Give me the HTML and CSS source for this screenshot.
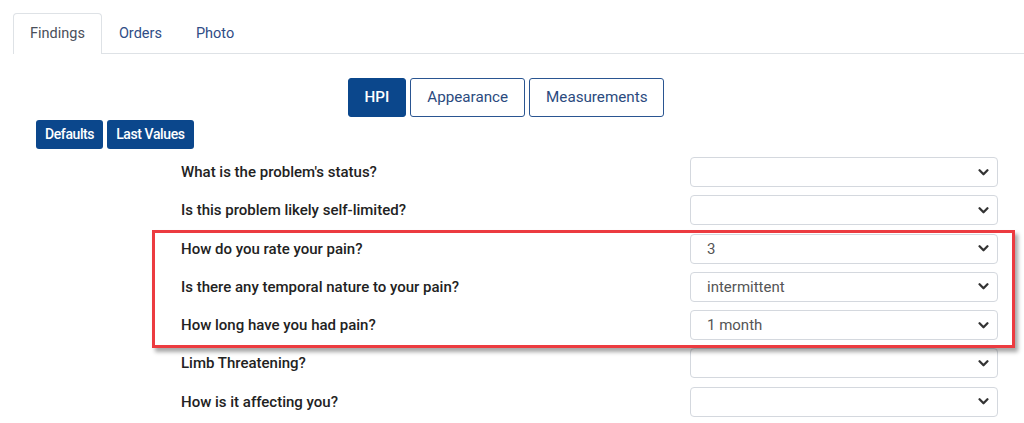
FILE: index.html
```html
<!DOCTYPE html>
<html>
<head>
<meta charset="utf-8">
<link rel="stylesheet" href="styles.css">
</head>
<body>
<div class="page">
  <div class="tabs">
    <div class="tab active">Findings</div>
    <div class="tab">Orders</div>
    <div class="tab">Photo</div>
  </div>
  <div class="seg">
    <div class="segbtn primary">HPI</div>
    <div class="segbtn">Appearance</div>
    <div class="segbtn">Measurements</div>
  </div>
  <div class="tools">
    <div class="tbtn">Defaults</div>
    <div class="tbtn">Last Values</div>
  </div>
  <div class="form">
    <div class="row"><div class="label">What is the problem's status?</div><div class="select"><span></span><svg class="chev" viewBox="0 0 12 8"><path d="M1.5 1.5 L6 6 L10.5 1.5" /></svg></div></div>
    <div class="row"><div class="label">Is this problem likely self-limited?</div><div class="select"><span></span><svg class="chev" viewBox="0 0 12 8"><path d="M1.5 1.5 L6 6 L10.5 1.5" /></svg></div></div>
    <div class="row"><div class="label">How do you rate your pain?</div><div class="select"><span>3</span><svg class="chev" viewBox="0 0 12 8"><path d="M1.5 1.5 L6 6 L10.5 1.5" /></svg></div></div>
    <div class="row"><div class="label">Is there any temporal nature to your pain?</div><div class="select"><span>intermittent</span><svg class="chev" viewBox="0 0 12 8"><path d="M1.5 1.5 L6 6 L10.5 1.5" /></svg></div></div>
    <div class="row"><div class="label">How long have you had pain?</div><div class="select"><span>1 month</span><svg class="chev" viewBox="0 0 12 8"><path d="M1.5 1.5 L6 6 L10.5 1.5" /></svg></div></div>
    <div class="row"><div class="label">Limb Threatening?</div><div class="select"><span></span><svg class="chev" viewBox="0 0 12 8"><path d="M1.5 1.5 L6 6 L10.5 1.5" /></svg></div></div>
    <div class="row"><div class="label">How is it affecting you?</div><div class="select"><span></span><svg class="chev" viewBox="0 0 12 8"><path d="M1.5 1.5 L6 6 L10.5 1.5" /></svg></div></div>
    <div class="highlight"></div>
  </div>
</div>
</body>
</html>
```

FILE: styles.css
```css
* { box-sizing: border-box; }
html, body { margin: 0; padding: 0; background: #fff; }
body { font-family: Roboto, "Liberation Sans", sans-serif; width: 1024px; height: 423px; overflow: hidden; }
.page { position: relative; padding-top: 13px; }
.tabs { display: flex; margin-left: 13px; border-bottom: 1px solid #dee2e6; height: 41px; }
.tab { padding: 0 16px; height: 40px; line-height: 40px; font-size: 14.5px; color: #2f4d86; border: 1px solid transparent; border-bottom: none; border-radius: 4px 4px 0 0; }
.tab.active { color: #4a4f5a; border-color: #dee2e6; background: #fff; height: 41px; margin-bottom: -1px; }
.seg { display: flex; justify-content: center; gap: 4px; margin-top: 24px; padding-right: 12px; }
.segbtn { height: 39px; line-height: 37px; padding: 0 16px; font-size: 15.2px; color: #2b4a7e; border: 1.5px solid #2a5591; border-radius: 3px; background: #fff; }
.segbtn.primary { background: #0b478c; color: #fff; border-color: #0b478c; padding: 0 16px; font-weight: 500; }
.tools { display: flex; gap: 4px; margin-left: 36px; margin-top: 3px; }
.tbtn { height: 29px; line-height: 29px; padding: 0 9px; font-size: 14px; font-weight: 500; color: #fff; background: #0b478c; border-radius: 3px; letter-spacing: -0.4px; }
.form { position: relative; margin-top: 8px; display: flex; flex-direction: column; gap: 8.3px; padding-left: 181px; }
.row { display: flex; align-items: center; height: 30px; }
.label { width: 509px; font-size: 15px; font-weight: 500; color: #222; }
.select { width: 308px; height: 30px; border: 1px solid #d4d8de; border-radius: 4px; display: flex; align-items: center; justify-content: space-between; padding: 0 8px 0 16px; font-size: 15px; color: #555; }
.chev { width: 11px; height: 7px; }
.chev path { fill: none; stroke: #333; stroke-width: 2.6; stroke-linecap: round; stroke-linejoin: round; }
.highlight { position: absolute; left: 152px; top: 73px; width: 863px; height: 118px; border: 3px solid #ec3b40; box-shadow: 3px 4px 4px rgba(0,0,0,0.35); pointer-events: none; }
```
